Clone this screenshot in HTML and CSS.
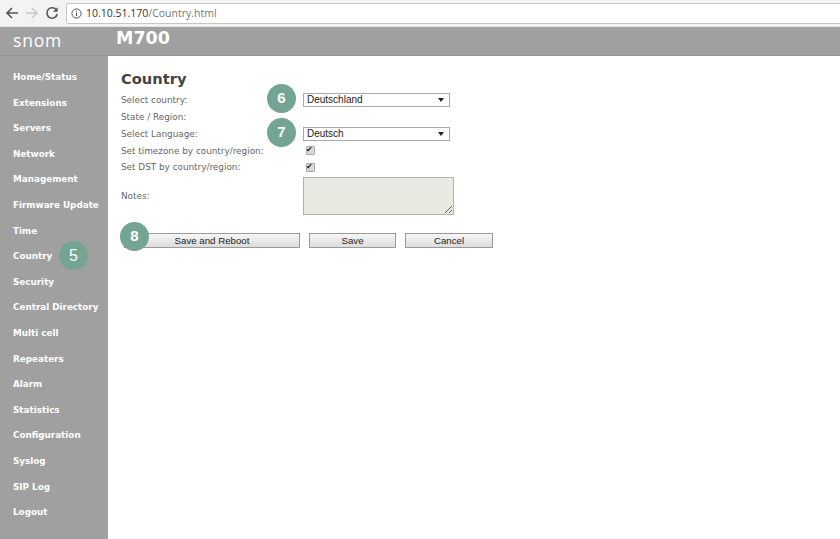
FILE: index.html
```html
<!DOCTYPE html>
<html lang="en">
<head>
<meta charset="utf-8">
<title>Country</title>
<link rel="stylesheet" href="styles.css">
</head>
<body>
<div class="toolbar">
  <svg class="tool" width="14" height="14" viewBox="0 0 14 14"><path d="M13 7H2M7 2 2 7l5 5" fill="none" stroke="#555" stroke-width="1.6"/></svg>
  <svg class="tool" width="14" height="14" viewBox="0 0 14 14"><path d="M1 7h11M7 2l5 5-5 5" fill="none" stroke="#c8c8c8" stroke-width="1.6"/></svg>
  <svg class="tool" width="14" height="14" viewBox="0 0 14 14"><path d="M11.5 4.2A5.2 5.2 0 1 0 12.2 8" fill="none" stroke="#555" stroke-width="1.6"/><path d="M12.6 1.2v4.6H8z" fill="#555"/></svg>
  <div class="address">
    <svg width="11" height="11" viewBox="0 0 11 11"><circle cx="5.5" cy="5.5" r="4.6" fill="none" stroke="#555" stroke-width="1"/><path d="M5.5 4.8v3.4M5.5 2.7v1.1" stroke="#555" stroke-width="1.1"/></svg>
    <span class="host">10.10.51.170</span><span class="path">/Country.html</span>
  </div>
</div>
<div class="page">
  <header class="head">
    <div class="logo">snom</div>
    <div class="model">M700</div>
  </header>
  <div class="body">
    <nav class="nav">
      <a>Home/Status</a>
      <a>Extensions</a>
      <a>Servers</a>
      <a>Network</a>
      <a>Management</a>
      <a>Firmware Update</a>
      <a>Time</a>
      <a class="has-badge">Country<span class="badge badge-nav">5</span></a>
      <a>Security</a>
      <a>Central Directory</a>
      <a>Multi cell</a>
      <a>Repeaters</a>
      <a>Alarm</a>
      <a>Statistics</a>
      <a>Configuration</a>
      <a>Syslog</a>
      <a>SIP Log</a>
      <a>Logout</a>
    </nav>
    <main class="main">
      <h1 class="title">Country</h1>
      <div class="form">
        <div class="row">
          <label>Select country:</label>
          <div class="field"><span class="badge badge-form">6</span><div class="select">Deutschland<i class="caret"></i></div></div>
        </div>
        <div class="row"><label>State / Region:</label><div class="field"></div></div>
        <div class="row">
          <label>Select Language:</label>
          <div class="field"><span class="badge badge-form">7</span><div class="select">Deutsch<i class="caret"></i></div></div>
        </div>
        <div class="row"><label>Set timezone by country/region:</label><div class="field"><input class="check" type="checkbox" checked></div></div>
        <div class="row"><label>Set DST by country/region:</label><div class="field"><input class="check" type="checkbox" checked></div></div>
        <div class="row row-notes"><label>Notes:</label><div class="field"><textarea class="notes"></textarea></div></div>
      </div>
      <div class="actions">
        <span class="badge badge-btn">8</span>
        <button class="btn btn-reboot">Save and Reboot</button>
        <button class="btn btn-save">Save</button>
        <button class="btn btn-cancel">Cancel</button>
      </div>
    </main>
  </div>
</div>
</body>
</html>
```
FILE: styles.css
```css
* { box-sizing: border-box; }
html, body { margin: 0; height: 100%; overflow: hidden; background: #fff; }
body { font-family: "DejaVu Sans", sans-serif; display: flex; flex-direction: column; }

.toolbar { height: 27px; flex: none; display: flex; align-items: center; background: #f3f3f3; padding-left: 5px; gap: 6px; border-bottom: 1px solid #e4e4e4; }
.tool { flex: none; }
.address { flex: 1; margin-right: -10px; height: 21px; margin-left: 1px; background: #fff; border: 1px solid #c6c6c6; border-radius: 2px; display: flex; align-items: center; padding-left: 4px; font: 10.5px "Open Sans", "Noto Sans", sans-serif; }
.address svg { margin-right: 4px; }
.host { color: #333; }
.path { color: #777; }

.page { flex: 1; display: flex; flex-direction: column; background: #a0a0a0; min-height: 0; }
.head { height: 29px; flex: none; display: flex; background: #a0a0a0; border-bottom: 1px solid #969696; }
.logo { width: 116px; padding: 1px 0 0 13px; color: #fff; font: 400 17.5px/24px "Open Sans", sans-serif; letter-spacing: .8px; }
.model { color: #fff; font: 700 17.5px/22px "DejaVu Sans", sans-serif; }

.body { flex: 1; display: flex; min-height: 0; }
.nav { width: 108px; flex: none; padding-top: 9px; display: flex; flex-direction: column; background: #a0a0a0; }
.nav a { height: 25.6px; line-height: 25.6px; padding-left: 13px; color: #fff; font-size: 8.8px; font-weight: 700; white-space: nowrap; position: relative; }

.main { flex: 1; background: #fff; padding: 13px 0 0 13px; color: #555; }
.title { margin: 0 0 4px; color: #444; font-size: 14.7px; line-height: 19px; font-weight: 700; }
.row { display: flex; align-items: center; height: 16.75px; font-size: 8.85px; }
.row label { width: 182px; flex: none; color: #666; }
.field { position: relative; flex: 1; display: flex; align-items: center; }
.row-notes { height: 40px; margin-top: .5px; }

.select { width: 147px; height: 14px; border: 1px solid #a9a9a9; background: #fff; color: #222; font: 10px/12px "Liberation Sans", sans-serif; padding-left: 3px; position: relative; }
.caret { position: absolute; right: 5px; top: 4px; border: 3px solid transparent; border-top: 4px solid #222; border-bottom: 0; }
.check { appearance: none; width: 9px; height: 9px; margin: 0 0 0 3px; background: #d8d8d8; border: 1px solid #aaa; border-radius: 1px; position: relative; }
.check::after { content: "✔"; position: absolute; left: -1px; top: -3px; font-size: 8px; line-height: 11px; color: #222; }
.notes { display: block; width: 151px; height: 38px; background: #e9e8e1; border: 1px solid #b4b4ae; border-radius: 0; margin: 0; padding: 0; }

.actions { position: relative; display: flex; margin-top: 17px; gap: 9px; padding-left: 3px; }
.btn { height: 15px; padding: 0; background: linear-gradient(#f6f6f6, #dcdcdc); border: 1px solid #9a9a9a; color: #222; font: 9.7px/13px "Liberation Sans", sans-serif; }
.btn-reboot { width: 176px; }
.btn-save { width: 87px; }
.btn-cancel { width: 88px; }

.badge { position: absolute; width: 29px; height: 29px; border-radius: 50%; background: #74a592; color: #fff; font: 700 15px/27px "Liberation Sans", sans-serif; text-align: center; }
.badge-nav { left: 59px; top: -3px; line-height: 29px; font-weight: 400; font-size: 16px; }
.badge-form { left: -36px; top: 50%; margin-top: -16px; }
.badge-btn { left: -1px; top: -11px; z-index: 1; }
```
